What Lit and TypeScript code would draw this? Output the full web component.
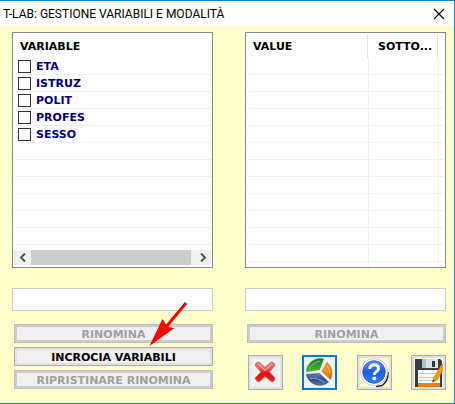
import { LitElement, html, svg, css } from "lit";
import { customElement, state } from "lit/decorators.js";

const crossIcon = svg`
  <svg viewBox="0 0 29 29" width="29" height="29" aria-hidden="true">
    <defs>
      <linearGradient id="red" x1="0" y1="0" x2="0" y2="1">
        <stop offset="0" stop-color="#f58a8a" /><stop offset=".45" stop-color="#e83a3a" />
        <stop offset=".55" stop-color="#de0f0f" /><stop offset="1" stop-color="#f02020" />
      </linearGradient>
    </defs>
    <path d="M8 4 L14 9.500 L20 4 Q23 4 24 7 L18.500 14 L24 20 Q24 23 21 24 L14 18.500 L8 24 Q5 23 4 20 L10 14 L4 7 Q5 4 8 4Z"
      fill="url(#red)" stroke="#e06060" stroke-width="1" stroke-linejoin="round" />
    <path d="M7 6 L14 12 L21 6" fill="none" stroke="#f7a0a0" stroke-width="1.500" />
  </svg>`;

const pieIcon = svg`
  <svg viewBox="0 0 29 29" width="29" height="29" aria-hidden="true">
    <defs>
      <linearGradient id="green" x1="0" y1="0" x2="0" y2="1">
        <stop offset="0" stop-color="#1c7424" /><stop offset="1" stop-color="#46b83c" />
      </linearGradient>
      <linearGradient id="orange" x1="0" y1="0" x2="1" y2="1">
        <stop offset="0" stop-color="#f8a040" /><stop offset=".6" stop-color="#ee8618" /><stop offset="1" stop-color="#b85c08" />
      </linearGradient>
      <linearGradient id="navy" x1="0" y1="0" x2="0" y2="1">
        <stop offset="0" stop-color="#6480b4" /><stop offset=".5" stop-color="#304c80" /><stop offset="1" stop-color="#4878b0" />
      </linearGradient>
    </defs>
    <path d="M18.500 1 L14.500 11.500 L1.500 13.500 A13.500 13.500 0 0 1 18.500 1Z" fill="url(#green)" stroke="#2c8434" stroke-width=".6" />
    <path d="M22 4.500 A14 14 0 0 1 27 14 A14 14 0 0 1 25.500 21.500 L17 13.500Z" fill="url(#orange)" stroke="#b46820" stroke-width=".6" />
    <path d="M1.500 16.500 L14.500 15.500 L23.500 24 A13.500 13.500 0 0 1 1.500 16.500Z" fill="url(#navy)" stroke="#283c64" stroke-width=".6" />
    <path d="M4.500 11.500 Q7 4.500 15 3" fill="none" stroke="#7ccc70" stroke-width="1" />
    <path d="M5 20.500 Q12 19 20 24.500" fill="none" stroke="#84a8d4" stroke-width="1" />
    <path d="M22.500 8 Q24.500 11 25 15" fill="none" stroke="#fcc480" stroke-width="1" />
  </svg>`;

const helpIcon = svg`
  <svg viewBox="0 0 29 29" width="29" height="29" aria-hidden="true">
    <defs>
      <linearGradient id="blue" x1="0" y1="0" x2="0" y2="1">
        <stop offset="0" stop-color="#6494f4" /><stop offset=".5" stop-color="#1c5ce8" /><stop offset="1" stop-color="#2c80fc" />
      </linearGradient>
    </defs>
    <rect width="29" height="29" fill="#ffffcc" />
    <path d="M28 14 Q28.500 23 22 27.500 L16 28.500" fill="none" stroke="#222" stroke-width="1.500" />
    <circle cx="14" cy="14" r="13.500" fill="#fff" stroke="#b8bcc8" stroke-width=".8" />
    <circle cx="14" cy="14" r="11.300" fill="url(#blue)" stroke="#2850b8" stroke-width=".8" />
    <path d="M9.800 11 Q10 6.800 14.300 6.800 Q18.500 7 18.500 10.400 Q18.300 12.500 16.200 13.700 Q14.300 14.800 14.300 17"
      fill="none" stroke="#fff" stroke-width="3" />
    <circle cx="14.300" cy="20.500" r="1.900" fill="#fff" />
  </svg>`;

const saveIcon = svg`
  <svg viewBox="0 0 29 29" width="29" height="29" aria-hidden="true">
    <rect width="29" height="29" fill="#ffffcc" />
    <path d="M1 1 H26 L28 3 V29 H1Z" fill="#3c3c40" />
    <path d="M8 1 H24 V10 H8Z" fill="#d4e2e6" />
    <path d="M8 1 H12 V10 H8Z" fill="#b0c4cc" />
    <rect x="18" y="3" width="3" height="6" fill="#303034" />
    <rect x="4" y="12" width="22" height="13" fill="#f8f8f4" />
    <path d="M5 15.500 H25 M5 19.500 H25 M5 22.500 H20" stroke="#b4cce0" stroke-width="1" />
    <rect x="4" y="25" width="22" height="4" fill="#f07c08" />
    <path d="M28 6 L31 9 L23 22 L18.500 24 L20 19.500Z" fill="#fc9810" stroke="#d87408" stroke-width=".7" />
    <path d="M18.500 24 L19.200 21.800 L20.800 23Z" fill="#503010" />
  </svg>`;

@customElement("app-root")
export class AppRoot extends LitElement {
  @state() private variables = ["ETA", "ISTRUZ", "POLIT", "PROFES", "SESSO"];

  static styles = css`
    :host { display: block; font: bold 11px/18px "DejaVu Sans", Verdana, sans-serif; color: #000; }
    * { box-sizing: border-box; }
    .window { min-height: 100vh; background: #ffffcc; border: 1px solid #1c7fd0; border-left: 0; display: flex; flex-direction: column; }
    .titlebar { height: 25px; background: #fff; display: flex; align-items: center; justify-content: space-between; padding: 0 8px 0 3px; }
    h1 { margin: 0; font: 12px/24px Roboto, "Segoe UI", sans-serif; white-space: nowrap; }
    .close { width: 14px; height: 14px; padding: 0; border: 0; background: none; display: grid; place-items: center; }
    .content { display: grid; grid-template-columns: 1fr 1fr; gap: 32px; padding: 6px 8px 12px 12px; }
    .column { display: flex; flex-direction: column; min-width: 0; }
    .list { height: 236px; background: #fff; border: 1px solid #828790; padding: 1px; display: flex; flex-direction: column; overflow: hidden; }
    table { width: 100%; table-layout: fixed; border-collapse: separate; border-spacing: 0; }
    th { height: 24px; padding: 1px 0 0 6px; text-align: left; font-weight: bold; white-space: nowrap; }
    td { height: 17px; padding: 0; border-bottom: 1px solid #f0f0f0; }
    .values th + th { padding-left: 9px; }
    .values .ruled { background: linear-gradient(#e5e5e5, #e5e5e5) no-repeat right 1px top / 1px 100%; }
    .values thead td { border: 0; }
    .values tbody td { border-right: 1px solid #f0f0f0; }
    .values tbody td:last-child { border-right: 0; }
    .values .rest td { height: 4px; border-bottom: 0; }
    .c-count { width: 70px; }
    .c-rest { width: 5px; }
    .check { display: flex; align-items: flex-start; gap: 5px; height: 16px; padding-left: 4px; color: #000080; }
    .check input { appearance: none; width: 13px; height: 13px; margin: 2px 0 0; border: 1px solid #333; background: #fff; }
    .check input:checked { background: #333; }
    .scroll { margin-top: auto; margin-bottom: 1px; height: 15px; display: flex; background: #f0f0f0; }
    .scroll button { width: 17px; padding: 0; border: 0; background: none; display: grid; place-items: center; }
    .thumb { flex: 1; background: #cdcdcd; margin-right: 3px; }
    .field { height: 23px; margin-top: 20px; padding: 0 4px; width: 100%; border: 1px solid #cccccc; background: #fff; font: inherit; }
    .actions { position: relative; display: flex; flex-direction: column; gap: 4px; margin-top: 13px; padding-left: 2px; }
    .push { height: 19px; width: 100%; padding: 2px 0 0; font: inherit; line-height: 15px; color: #000; background: #f0f0f0; border: 1px solid #adadad; box-shadow: inset 0 0 0 2px #e1e1e1; }
    .push:disabled { color: #a0a0a0; border-color: #bfbfbf; box-shadow: inset 0 0 0 2px #cccccc; }
    .tools { display: flex; justify-content: space-between; margin-top: 12px; padding-left: 3px; }
    .tool { width: 35px; height: 35px; padding: 0; border: 1px solid #adadad; background: #f0f0f0; box-shadow: inset 0 0 0 2px #e1e1e1; display: grid; place-items: center; overflow: hidden; }
    .tool svg { display: block; overflow: hidden; }
    .tool.active { border-color: #0078d7; box-shadow: inset 0 0 0 1px #0078d7; }
    .arrow { position: absolute; left: 134px; top: -24px; pointer-events: none; }
  `;

  render() {
    return html`
      <main class="window">
        <header class="titlebar">
          <h1>T-LAB: GESTIONE VARIABILI E MODALITÀ</h1>
          <button class="close" aria-label="Chiudi">
            <svg width="12" height="12" viewBox="0 0 12 12"><path d="M1 1 L11 11 M11 1 L1 11" stroke="#000" stroke-width="1.100" /></svg>
          </button>
        </header>
        <div class="content">
          <section class="column">
            <div class="list">
              <table>
                <thead><tr><th>VARIABLE</th></tr></thead>
                <tbody>
                  ${this.variables.map((name) => html`<tr><td><label class="check"><input type="checkbox" />${name}</label></td></tr>`)}
                  ${Array.from({ length: 6 }, () => html`<tr><td></td></tr>`)}
                </tbody>
              </table>
              <div class="scroll">
                <button aria-label="Scorri a sinistra">
                  <svg width="8" height="9" viewBox="0 0 8 9"><path d="M6 .5 L2 4.500 L6 8.500" fill="none" stroke="#505050" stroke-width="2" /></svg>
                </button>
                <div class="thumb"></div>
                <button aria-label="Scorri a destra">
                  <svg width="8" height="9" viewBox="0 0 8 9"><path d="M2 .5 L6 4.500 L2 8.500" fill="none" stroke="#505050" stroke-width="2" /></svg>
                </button>
              </div>
            </div>
            <input class="field" type="text" aria-label="Nome della variabile" />
            <div class="actions">
              <button class="push" disabled>RINOMINA</button>
              <button class="push">INCROCIA VARIABILI</button>
              <button class="push" disabled>RIPRISTINARE RINOMINA</button>
              <svg class="arrow" width="44" height="48" viewBox="0 0 44 48" aria-hidden="true">
                <path d="M40 3 L20 27" stroke="#ff0000" stroke-width="3" />
                <path d="M3.500 46 L16.500 19 L20 24.500 L22.500 27 L28.500 28Z" fill="#ff0000" />
              </svg>
            </div>
          </section>
          <section class="column">
            <div class="list">
              <table class="values">
                <colgroup><col /><col class="c-count" /><col class="c-rest" /></colgroup>
                <thead><tr><th class="ruled">VALUE</th><th class="ruled">SOTTO...</th><td></td></tr></thead>
                <tbody>
                  ${Array.from({ length: 12 }, () => html`<tr><td></td><td></td><td></td></tr>`)}
                  <tr class="rest"><td></td><td></td><td></td></tr>
                </tbody>
              </table>
            </div>
            <input class="field" type="text" aria-label="Nome del valore" />
            <div class="actions">
              <button class="push" disabled>RINOMINA</button>
            </div>
            <div class="tools">
              <button class="tool" aria-label="Annulla">${crossIcon}</button>
              <button class="tool active" aria-label="Grafico">${pieIcon}</button>
              <button class="tool" aria-label="Aiuto">${helpIcon}</button>
              <button class="tool" aria-label="Salva">${saveIcon}</button>
            </div>
          </section>
        </div>
      </main>
    `;
  }
}
